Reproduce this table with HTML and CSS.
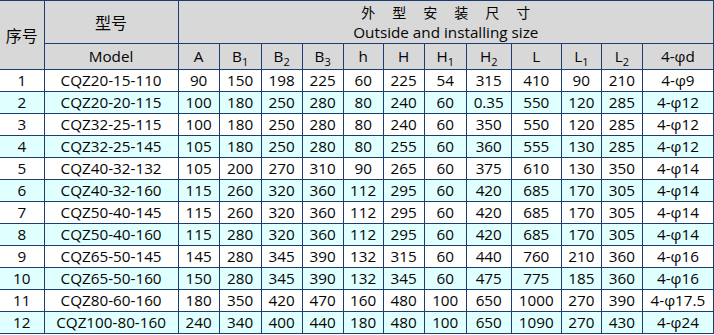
FILE: index.html
```html
<!DOCTYPE html>
<html lang="zh">
<head>
<meta charset="utf-8">
<title>外型安装尺寸</title>
<link rel="stylesheet" href="styles.css">
</head>
<body>
<table class="spec">
  <colgroup>
    <col class="c-no"><col class="c-model"><col class="c41"><col class="c42"><col class="c41"><col class="c41"><col class="c40"><col class="c41"><col class="c42"><col class="c45"><col class="c50"><col class="c40"><col class="c41"><col class="c71">
  </colgroup>
  <thead>
    <tr class="h1">
      <th rowspan="2" class="cn">序号</th>
      <th class="cn">型号</th>
      <th colspan="12" class="size">
        <div class="size-cn">外型安装尺寸</div>
        <div class="size-en">Outside and installing size</div>
      </th>
    </tr>
    <tr class="h2">
      <th>Model</th>
      <th>A</th>
      <th>B<span class="sub">1</span></th>
      <th>B<span class="sub">2</span></th>
      <th>B<span class="sub">3</span></th>
      <th>h</th>
      <th>H</th>
      <th>H<span class="sub">1</span></th>
      <th>H<span class="sub">2</span></th>
      <th>L</th>
      <th>L<span class="sub">1</span></th>
      <th>L<span class="sub">2</span></th>
      <th>4-φd</th>
    </tr>
  </thead>
  <tbody>
    <tr><td>1</td><td>CQZ20-15-110</td><td>90</td><td>150</td><td>198</td><td>225</td><td>60</td><td>225</td><td>54</td><td>315</td><td>410</td><td>90</td><td>210</td><td>4-φ9</td></tr>
    <tr><td>2</td><td>CQZ20-20-115</td><td>100</td><td>180</td><td>250</td><td>280</td><td>80</td><td>240</td><td>60</td><td>0.35</td><td>550</td><td>120</td><td>285</td><td>4-φ12</td></tr>
    <tr><td>3</td><td>CQZ32-25-115</td><td>100</td><td>180</td><td>250</td><td>280</td><td>80</td><td>240</td><td>60</td><td>350</td><td>550</td><td>120</td><td>285</td><td>4-φ12</td></tr>
    <tr><td>4</td><td>CQZ32-25-145</td><td>105</td><td>180</td><td>250</td><td>280</td><td>80</td><td>255</td><td>60</td><td>360</td><td>555</td><td>130</td><td>285</td><td>4-φ12</td></tr>
    <tr><td>5</td><td>CQZ40-32-132</td><td>105</td><td>200</td><td>270</td><td>310</td><td>90</td><td>265</td><td>60</td><td>375</td><td>610</td><td>130</td><td>350</td><td>4-φ14</td></tr>
    <tr><td>6</td><td>CQZ40-32-160</td><td>115</td><td>260</td><td>320</td><td>360</td><td>112</td><td>295</td><td>60</td><td>420</td><td>685</td><td>170</td><td>305</td><td>4-φ14</td></tr>
    <tr><td>7</td><td>CQZ50-40-145</td><td>115</td><td>260</td><td>320</td><td>360</td><td>112</td><td>295</td><td>60</td><td>420</td><td>685</td><td>170</td><td>305</td><td>4-φ14</td></tr>
    <tr><td>8</td><td>CQZ50-40-160</td><td>115</td><td>280</td><td>320</td><td>360</td><td>112</td><td>295</td><td>60</td><td>420</td><td>685</td><td>170</td><td>305</td><td>4-φ14</td></tr>
    <tr><td>9</td><td>CQZ65-50-145</td><td>145</td><td>280</td><td>345</td><td>390</td><td>132</td><td>315</td><td>60</td><td>440</td><td>760</td><td>210</td><td>360</td><td>4-φ16</td></tr>
    <tr><td>10</td><td>CQZ65-50-160</td><td>150</td><td>280</td><td>345</td><td>390</td><td>132</td><td>345</td><td>60</td><td>475</td><td>775</td><td>185</td><td>360</td><td>4-φ16</td></tr>
    <tr><td>11</td><td>CQZ80-60-160</td><td>180</td><td>350</td><td>420</td><td>470</td><td>160</td><td>480</td><td>100</td><td>650</td><td>1000</td><td>270</td><td>390</td><td>4-φ17.5</td></tr>
    <tr><td>12</td><td>CQZ100-80-160</td><td>240</td><td>340</td><td>400</td><td>440</td><td>180</td><td>480</td><td>100</td><td>650</td><td>1090</td><td>270</td><td>430</td><td>4-φ24</td></tr>
  </tbody>
</table>
</body>
</html>
```

FILE: styles.css
```css
html, body {
  margin: 0;
  padding: 0;
  background: #ffffff;
}

.spec {
  border-collapse: collapse;
  table-layout: fixed;
  width: 714px;
  font-family: "Open Sans", "Noto Sans CJK SC", sans-serif;
  font-size: 15.25px;
  color: #050505;
  border-top: 1px solid #c6d0de;
}

.c-no { width: 44px; }
.c-model { width: 134px; }
.c40 { width: 40px; }
.c41 { width: 41px; }
.c42 { width: 42px; }
.c45 { width: 45px; }
.c50 { width: 50px; }
.c71 { width: 71px; }

.spec th,
.spec td {
  border: 1px solid #1c3d70;
  padding: 0;
  text-align: center;
  white-space: nowrap;
  overflow: hidden;
}

.spec tr > :first-child {
  border-left: none;
}

.spec thead th {
  background: #d8d8d8;
  font-weight: normal;
}

.spec .h1 th {
  height: 42px;
}

.spec .h2 th {
  height: 25px;
  line-height: 25px;
}

.spec td {
  height: 21px;
  line-height: 21px;
}

.spec tbody tr:nth-child(even) td {
  background: #e0ffff;
}

.cn {
  font-family: "Noto Sans CJK SC", sans-serif;
  font-size: 16px;
}

.size {
  vertical-align: top;
}

.size-cn {
  font-family: "Noto Sans CJK SC", sans-serif;
  font-size: 14px;
  letter-spacing: 17px;
  padding-left: 17px;
  line-height: 22px;
  height: 20px;
}

.size-en {
  line-height: 22px;
}

.sub {
  font-size: 11px;
  vertical-align: -4px;
  line-height: 0;
}
```
